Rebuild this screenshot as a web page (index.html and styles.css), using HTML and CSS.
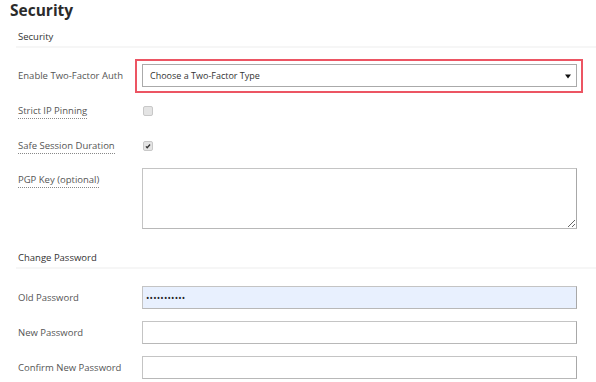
FILE: index.html
```html
<!DOCTYPE html>
<html lang="en">

    <head>
        <meta charset="UTF-8">
        <meta name="viewport" content="width=device-width, initial-scale=1.0">
        <title>Security</title>
        <link rel="stylesheet" href="styles.css">
    </head>

    <body>
        <h2 class="title">Security</h2>

        <div class="panel">
            <div class="panel-head">Security</div>

            <div class="row first">
                <div class="label">Enable Two-Factor Auth</div>
                <div class="highlight">
                    <div class="select">
                        <span>Choose a Two-Factor Type</span>
                        <svg class="arrow" width="6" height="6" viewBox="0 0 6 6"><path d="M0 1.5h6L3 5.5z" fill="#111"/></svg>
                    </div>
                </div>
            </div>

            <div class="row">
                <div class="label"><span class="tip">Strict IP Pinning</span></div>
                <span class="check"></span>
            </div>

            <div class="row">
                <div class="label"><span class="tip">Safe Session Duration</span></div>
                <span class="check">
                    <svg width="10" height="10" viewBox="0 0 10 10"><path d="M2.4 5.4l1.6 1.7 3.6-4" stroke="#333" stroke-width="1.6" fill="none"/></svg>
                </span>
            </div>

            <div class="row top">
                <div class="label"><span class="tip">PGP Key (optional)</span></div>
                <textarea class="field area"></textarea>
            </div>

            <div class="panel-head second">Change Password</div>

            <div class="row pw">
                <div class="label plain">Old Password</div>
                <div class="field filled">&bull;&bull;&bull;&bull;&bull;&bull;&bull;&bull;&bull;&bull;&bull;</div>
            </div>

            <div class="row">
                <div class="label plain">New Password</div>
                <div class="field"></div>
            </div>

            <div class="row">
                <div class="label plain">Confirm New Password</div>
                <div class="field"></div>
            </div>
        </div>
    </body>

</html>
```

FILE: styles.css
```css
body {
    margin: 0;
    padding: 0;
    font-family: "Open Sans", "Noto Sans", sans-serif;
    color: #333;
    background: #fff;
}

.title {
    margin: 0;
    padding-left: 10px;
    font-size: 15.5px;
    line-height: 20px;
    font-weight: 700;
    color: #2b2b2b;
}

.panel {
    margin-left: 16px;
}

.panel-head {
    margin-top: 8px;
    padding-left: 2px;
    font-size: 9.5px;
    line-height: 18px;
    color: #333;
    border-bottom: 2px solid #f6f6f6;
}

.panel-head.second {
    margin-top: 20px;
}

.row {
    display: flex;
    align-items: center;
    min-height: 23px;
    margin-top: 12px;
    padding-left: 2px;
}

.row.first {
    margin-top: 16px;
}

.row.top {
    align-items: flex-start;
    margin-top: 11px;
}

.row.pw {
    margin-top: 17px;
}

.label {
    width: 124px;
    flex: none;
    font-size: 9.5px;
    color: #555;
}

.row.top .label {
    padding-top: 5px;
}

.tip {
    border-bottom: 1px dotted #888;
    padding-bottom: 1px;
}

.highlight {
    margin: -5px -6px -6px -7px;
    padding: 3px 4px 4px 5px;
    border: 2px solid #ec5563;
}

.select {
    box-sizing: border-box;
    width: 435px;
    height: 23px;
    display: flex;
    align-items: center;
    justify-content: space-between;
    padding: 0 5px 0 7px;
    border: 1px solid #aaa;
    font-size: 9px;
    color: #333;
}

.arrow {
    display: block;
}

.check {
    box-sizing: border-box;
    width: 10px;
    height: 10px;
    margin-left: 1px;
    border: 1px solid #c8c8c8;
    border-radius: 2px;
    background: #e4e4e4;
    display: flex;
    align-items: center;
    justify-content: center;
}

.check svg {
    display: block;
}

.field {
    box-sizing: border-box;
    width: 435px;
    height: 23px;
    border: 1px solid #c4c4c4;
    border-right-color: #a8a8a8;
    border-bottom-color: #b8b8b8;
    background: #fff;
}

.area {
    height: 61px;
    margin: 0;
    resize: vertical;
    font-family: inherit;
}

.filled {
    background: #e8f0fe;
    display: flex;
    align-items: center;
    padding-left: 3px;
    font-size: 9px;
    letter-spacing: 0.2px;
    color: #222;
}
```
